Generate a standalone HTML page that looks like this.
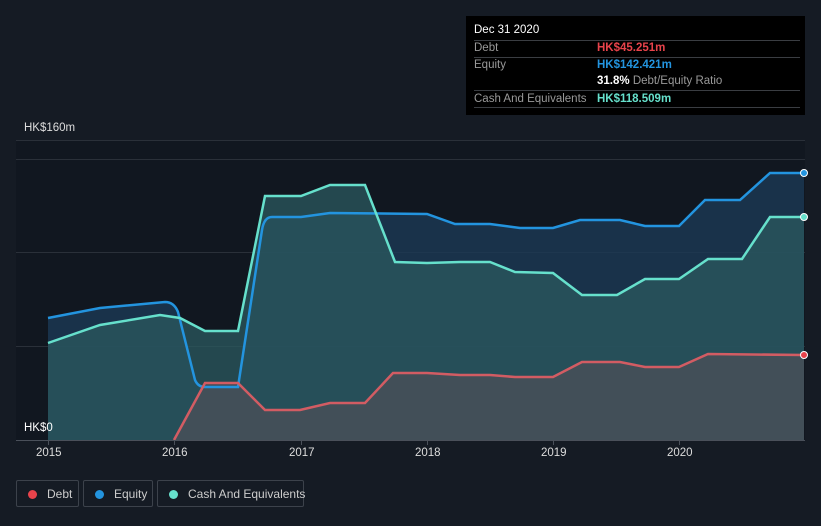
<!DOCTYPE html><html><head><style>
body{margin:0;width:821px;height:526px;background:#151b24;font-family:"Liberation Sans",sans-serif;overflow:hidden;position:relative}
.tt{position:absolute;left:466px;top:16px;width:339px;height:99px;background:#000;color:#fff;font-size:11.5px}
.tt .r{position:absolute;left:8px;right:5px;border-top:1px solid #3a3d42}
.lbl{color:#999}
.leg{position:absolute;top:480px;height:27px;border:1px solid #3c424b;border-radius:2px;color:#ccc;font-size:12px;line-height:26px;box-sizing:border-box;white-space:nowrap}
.leg i{display:inline-block;width:9px;height:9px;border-radius:50%;margin:0 10px 0 11px;vertical-align:-1px}
.ax{position:absolute;top:447px;color:#ddd;font-size:11.5px}
</style></head><body>
<svg width="821" height="526" style="position:absolute;left:0;top:0">
<rect x="16" y="140" width="789" height="300" fill="#111720"/>
<g stroke="#2a3039" stroke-width="1"><line x1="16" y1="140.5" x2="805" y2="140.5"/><line x1="16" y1="159.5" x2="805" y2="159.5"/><line x1="16" y1="252.5" x2="805" y2="252.5"/><line x1="16" y1="346.5" x2="805" y2="346.5"/></g>
<path d="M48,318 L100,308 L165,302 Q174,302 178,312 L195,380 Q198,387 205,387 L238,387 L262,230 Q264,217 272,217 L301,217 L330,213 L427,214 L455,224 L490,224 L520,228 L553,228 L580,220 L620,220 L645,226 L679,226 L705,200 L740,200 L770,173 L804,173 L804,440 L48,440Z" fill="#1b3a55" opacity="0.8"/>
<path d="M48,343 L100,325 L160,315 L180,318 L205,331 L238,331 L265,196 L301,196 L330,185 L365,185 L395,262 L427,263 L460,262 L490,262 L515,272 L553,273 L582,295 L617,295 L645,279 L679,279 L708,259 L742,259 L770,217 L804,217 L804,440 L48,440Z" fill="#2b5a5f" opacity="0.75"/>
<path d="M174,440 L205,383 L238,383 L265,410 L300,410 L330,403 L365,403 L393,373 L427,373 L460,375 L490,375 L515,377 L553,377 L582,362 L620,362 L645,367 L679,367 L708,354 L804,355 L804,440Z" fill="#4a4f58" opacity="0.8"/>
<path d="M48,318 L100,308 L165,302 Q174,302 178,312 L195,380 Q198,387 205,387 L238,387 L262,230 Q264,217 272,217 L301,217 L330,213 L427,214 L455,224 L490,224 L520,228 L553,228 L580,220 L620,220 L645,226 L679,226 L705,200 L740,200 L770,173 L804,173" fill="none" stroke="#2394df" stroke-width="2.5"/>
<path d="M48,343 L100,325 L160,315 L180,318 L205,331 L238,331 L265,196 L301,196 L330,185 L365,185 L395,262 L427,263 L460,262 L490,262 L515,272 L553,273 L582,295 L617,295 L645,279 L679,279 L708,259 L742,259 L770,217 L804,217" fill="none" stroke="#66e0cc" stroke-width="2.5"/>
<path d="M174,440 L205,383 L238,383 L265,410 L300,410 L330,403 L365,403 L393,373 L427,373 L460,375 L490,375 L515,377 L553,377 L582,362 L620,362 L645,367 L679,367 L708,354 L804,355" fill="none" stroke="#d25c63" stroke-width="2.5"/>
<line x1="16" y1="440.5" x2="805" y2="440.5" stroke="#4a505a"/>
<g stroke="#4a505a"><line x1="48.5" y1="440" x2="48.5" y2="445"/><line x1="174.5" y1="440" x2="174.5" y2="445"/><line x1="301.5" y1="440" x2="301.5" y2="445"/><line x1="427.5" y1="440" x2="427.5" y2="445"/><line x1="553.5" y1="440" x2="553.5" y2="445"/><line x1="679.5" y1="440" x2="679.5" y2="445"/></g>
<circle cx="804" cy="173" r="3.5" fill="#2394df" stroke="#fff" stroke-width="1"/>
<circle cx="804" cy="217" r="3.5" fill="#66e0cc" stroke="#fff" stroke-width="1"/>
<circle cx="804" cy="355" r="3.5" fill="#e8434b" stroke="#fff" stroke-width="1"/>
</svg>
<div style="position:absolute;left:24px;top:122px;color:#ddd;font-size:11.5px">HK$160m</div>
<div style="position:absolute;left:24px;top:422px;color:#fff;font-size:11.5px">HK$0</div>
<div class="ax" style="left:36px">2015</div><div class="ax" style="left:162px">2016</div><div class="ax" style="left:289px">2017</div><div class="ax" style="left:415px">2018</div><div class="ax" style="left:541px">2019</div><div class="ax" style="left:667px">2020</div>
<div class="tt">
<div style="position:absolute;left:8px;top:8px">Dec 31 2020</div>
<div class="r" style="top:24px"></div>
<div class="lbl" style="position:absolute;left:8px;top:26px">Debt</div><div style="position:absolute;left:131px;top:26px;color:#e8434b;font-weight:bold">HK$45.251m</div>
<div class="r" style="top:41px"></div>
<div class="lbl" style="position:absolute;left:8px;top:43px">Equity</div><div style="position:absolute;left:131px;top:43px;color:#2394df;font-weight:bold">HK$142.421m</div>
<div style="position:absolute;left:131px;top:59px"><b>31.8%</b> <span class="lbl">Debt/Equity Ratio</span></div>
<div class="r" style="top:74px"></div>
<div class="lbl" style="position:absolute;left:8px;top:77px">Cash And Equivalents</div><div style="position:absolute;left:131px;top:77px;color:#66e0cc;font-weight:bold">HK$118.509m</div>
<div class="r" style="top:91px"></div>
</div>
<div class="leg" style="left:16px;width:63px"><i style="background:#e8434b"></i>Debt</div>
<div class="leg" style="left:83px;width:70px"><i style="background:#2394df"></i>Equity</div>
<div class="leg" style="left:157px;width:147px"><i style="background:#66e0cc"></i>Cash And Equivalents</div>
</body></html>
